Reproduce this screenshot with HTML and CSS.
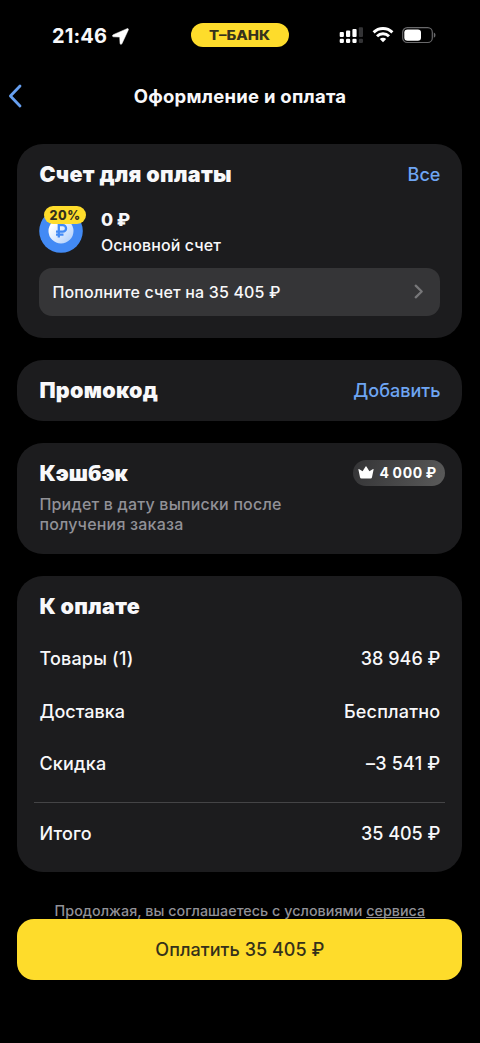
FILE: index.html
```html
<!DOCTYPE html>
<html lang="ru">
<head>
<meta charset="utf-8">
<meta name="viewport" content="width=device-width, initial-scale=1">
<title>Оформление и оплата</title>
<link rel="stylesheet" href="styles.css">
</head>
<body>
<div class="screen">
  <div class="status">
    <div class="clock">
      <span class="time">21:46</span>
      <svg class="arrow" width="17" height="17" viewBox="0 0 17 17"><path d="M15 .7 1.200 6.700C.1 7.200.3 8.700 1.500 8.800l6.200.3.3 6.200c.1 1.300 1.500 1.500 2 .3L16.300 2C16.700 1 16 .3 15 .7Z" fill="#fff" stroke="#fff" stroke-width=".5"/></svg>
    </div>
    <div class="brand"><span class="brand-name">Т–БАНК</span></div>
    <div class="signals">
      <svg width="25" height="17" viewBox="0 0 25 17" fill="#fff">
        <rect x=".7" y="5" width="4.200" height="5" rx="1"/><rect x="7" y="3.400" width="4.200" height="6.600" rx="1"/><rect x="13.400" y="2" width="4.200" height="8" rx="1"/><rect x="19.800" y=".3" width="4.200" height="9.700" rx="1" fill="#333335"/>
        <rect x=".7" y="11.800" width="4.200" height="4.200" rx="1.200"/><rect x="7" y="11.800" width="4.200" height="4.200" rx="1.200"/><rect x="13.400" y="11.800" width="4.200" height="4.200" rx="1.200"/><rect x="19.800" y="11.800" width="4.200" height="4.200" rx="1.200" fill="#333335"/>
      </svg>
      <svg class="wifi" width="22" height="16" viewBox="0 0 22 16" fill="none" stroke="#fff" stroke-width="2.900">
        <path d="M1.600 5.400a13.300 13.300 0 0 1 18.800 0"/><path d="M5 9.200a8.500 8.500 0 0 1 12 0"/><path d="M7.800 12a4.600 4.600 0 0 1 6.400 0L11 15.200Z" fill="#fff" stroke="none"/>
      </svg>
      <svg class="battery" width="34" height="17" viewBox="0 0 34 17">
        <rect x=".7" y=".7" width="29.600" height="14.800" rx="4.600" fill="none" stroke="#69696b" stroke-width="1.200"/><rect x="2.300" y="2.400" width="16.700" height="11.400" rx="3.200" fill="#fff"/><path d="M31.800 5.500c2.200.9 2.200 4.300 0 5.200Z" fill="#69696b"/>
      </svg>
    </div>
  </div>

  <header class="nav">
    <svg class="back" width="15" height="24" viewBox="0 0 15 24"><path d="M12 2 2.400 12 12 22" fill="none" stroke="#669ff0" stroke-width="2.800" stroke-linecap="round" stroke-linejoin="round"/></svg>
    <h1 class="nav-title">Оформление и оплата</h1>
  </header>

  <main class="cards">
    <section class="card account">
      <div class="head"><h2 class="title">Счет для оплаты</h2><a class="link">Все</a></div>
      <div class="source">
        <div class="coin">
          <svg width="44" height="44" viewBox="0 0 44 44">
            <defs><linearGradient id="coin" x1="0" y1="0" x2="1" y2="1"><stop offset=".2" stop-color="#fff"/><stop offset="1" stop-color="#a9cbfb"/></linearGradient></defs>
            <circle cx="22" cy="22" r="21.800" fill="#428af5"/><circle cx="22" cy="22" r="12.500" fill="url(#coin)"/>
            <path d="M19.800 28.500V16.200h4a3.200 3.200 0 0 1 0 6.500H17M17 25.700h7.500" fill="none" stroke="#428af5" stroke-width="2.300"/>
          </svg>
          <span class="discount">20%</span>
        </div>
        <div class="source-text"><div class="balance">0 ₽</div><div class="source-name">Основной счет</div></div>
      </div>
      <div class="topup">
        <span class="topup-text">Пополните счет на 35 405 ₽</span>
        <svg width="10" height="15" viewBox="0 0 10 15"><path d="M1.700 1.700 7.700 7.500 1.700 13.300" fill="none" stroke="#777779" stroke-width="2.300" stroke-linecap="round" stroke-linejoin="round"/></svg>
      </div>
    </section>

    <section class="card promo">
      <div class="head"><h2 class="title">Промокод</h2><a class="link">Добавить</a></div>
    </section>

    <section class="card cashback">
      <div class="head"><h2 class="title tight">Кэшбэк</h2>
        <div class="points">
          <svg width="16" height="13" viewBox="0 0 16 13"><path d="M.9 3.100 4.600 5.300 7.600.6Q8 .1 8.400.6L11.400 5.300 15.100 3.100Q15.700 2.800 15.600 3.500L14 11.300Q13.800 12.500 12.500 12.500H3.500Q2.200 12.500 2 11.300L.4 3.500Q.3 2.800.9 3.100Z" fill="#fff"/></svg>
          <span class="points-value">4 000 ₽</span>
        </div>
      </div>
      <p class="note">Придет в дату выписки после<br>получения заказа</p>
    </section>

    <section class="card total">
      <div class="head"><h2 class="title">К оплате</h2></div>
      <div class="row"><span class="wide">Товары (1)</span><span>38 946 ₽</span></div>
      <div class="row"><span>Доставка</span><span class="wide">Бесплатно</span></div>
      <div class="row"><span class="wide">Скидка</span><span class="wide">–3 541 ₽</span></div>
      <div class="divider"></div>
      <div class="row"><span class="wide">Итого</span><span>35 405 ₽</span></div>
    </section>
  </main>

  <footer class="footer">
    <p class="terms">Продолжая, вы соглашаетесь с условиями <a class="terms-link">сервиса</a></p>
    <button class="pay">Оплатить 35 405 ₽</button>
  </footer>
</div>
</body>
</html>
```
FILE: styles.css
```css
* { box-sizing: border-box; }
body { margin: 0; background: #000; color: #f8f8fa; font-family: Inter, "Liberation Sans", sans-serif; }
h1, h2, p { margin: 0; }
.screen { height: 1043px; overflow: hidden; display: flex; flex-direction: column; background: #000; }

.status { height: 70px; flex: none; display: grid; grid-template-columns: 191px 98px 1fr; align-items: center; }
.clock { display: flex; align-items: center; padding: 2px 0 0 52px; gap: 5px; }
.time { font-size: 20px; line-height: 24px; font-weight: 650; letter-spacing: .15px; }
.brand { height: 24px; border-radius: 12px; background: #fedc2b; display: flex; align-items: center; justify-content: center; }
.brand-name { color: #36321c; font-size: 12.500px; line-height: 24px; padding-top: 1px; font-weight: 800; transform: scaleX(1.200); }
.signals { display: flex; align-items: center; padding-left: 50px; }
.wifi { margin-left: 8px; }
.battery { margin-left: 8px; }

.nav { height: 74px; flex: none; display: grid; grid-template-columns: 1fr auto 1fr; padding: 14px 8px 0; align-items: start; }
.nav-title { font-size: 18.500px; line-height: 24px; font-weight: 700; letter-spacing: .25px; }

.cards { flex: none; display: flex; flex-direction: column; gap: 22.500px; padding: 0 17.600px 0 17.400px; }
.card { background: #1c1c1e; border-radius: 26px; padding: 17px 22px 0; }
.account { height: 193.500px; }
.promo { height: 60.500px; }
.cashback { height: 110.500px; }
.total { height: 296px; }
.head { display: flex; justify-content: space-between; align-items: center; height: 27px; }
.title { font-size: 21.500px; line-height: 27px; font-weight: 900; letter-spacing: .3px; white-space: nowrap; }
.title.tight { letter-spacing: .05px; }
.link { color: #6ea5f3; font-size: 18px; line-height: 27px; font-weight: 500; }

.source { display: flex; gap: 17.500px; height: 44px; margin-top: 20.600px; }
.coin { position: relative; width: 44px; height: 44px; }
.coin svg { display: block; }
.discount { position: absolute; left: 4.500px; top: -3px; width: 42.500px; height: 18px; border-radius: 9px; background: #fedc2b; color: #33301d; font-size: 12.500px; line-height: 19px; font-weight: 800; text-align: center; letter-spacing: .6px; }
.balance { font-size: 17.500px; line-height: 24px; font-weight: 850; margin-top: -1px; }
.source-name { font-size: 16px; line-height: 24px; font-weight: 450; letter-spacing: .1px; margin-top: 1px; }
.topup { height: 48px; margin-top: 15.400px; border-radius: 13px; background: #353537; display: flex; justify-content: space-between; align-items: center; padding: 0 16px 0 13px; }
.topup-text { font-size: 16px; line-height: 24px; font-weight: 500; letter-spacing: .16px; }

.points { height: 26px; width: 92px; margin: -2px -5px 0 0; border-radius: 13px; background: linear-gradient(110deg, #343436, #5a5a5a); display: flex; align-items: center; gap: 5px; padding-left: 5px; color: #fff; }
.points-value { font-size: 14px; line-height: 24px; font-weight: 700; white-space: nowrap; letter-spacing: .6px; word-spacing: -.8px; }
.note { color: #919197; font-size: 16px; line-height: 19.500px; font-weight: 500; margin-top: 8px; letter-spacing: .2px; }

.total .head { margin-bottom: 13.200px; }
.row { display: flex; justify-content: space-between; align-items: center; height: 52.300px; font-size: 18px; line-height: 24px; font-weight: 500; }
.wide { letter-spacing: .2px; }
.divider { height: 1px; background: #444446; margin: 11.800px -5px 5px; }

.footer { padding: 29px 17.600px 0 17.400px; }
.terms { height: 17.500px; color: #919197; text-align: center; font-size: 14.300px; line-height: 19px; font-weight: 450; letter-spacing: .04px; white-space: nowrap; }
.terms-link { text-decoration: underline; text-decoration-thickness: 1px; text-underline-offset: 1px; text-decoration-skip-ink: none; }
.pay { position: relative; display: flex; align-items: center; justify-content: center; width: 100%; height: 61px; padding: 1px 0 0; border: 0; border-radius: 17px; background: #fedc2b; color: #35311a; font-family: inherit; font-size: 18px; line-height: 24px; font-weight: 500; letter-spacing: .05px; }
```
